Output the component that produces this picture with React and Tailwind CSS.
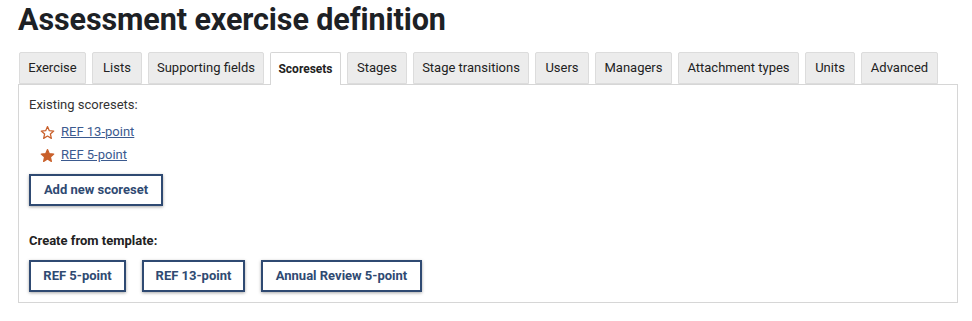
const tabs = [
    { label: "Exercise", w: "w-[67px]" },
    { label: "Lists", w: "w-[50px]" },
    { label: "Supporting fields", w: "w-[116px]" },
    { label: "Scoresets", w: "w-[71px]", active: true },
    { label: "Stages", w: "w-[60px]" },
    { label: "Stage transitions", w: "w-[116px]" },
    { label: "Users", w: "w-[54px]" },
    { label: "Managers", w: "w-[77px]" },
    { label: "Attachment types", w: "w-[121px]" },
    { label: "Units", w: "w-[50px]" },
    { label: "Advanced", w: "w-[77px]" },
];

const Star = ({ filled }) => (
    <svg width="15" height="15" viewBox="0 0 24 24" className="shrink-0">
        <path
            d="M12 2.5l2.9 6.6 7.1.6-5.4 4.7 1.6 7-6.2-3.7-6.2 3.7 1.6-7L2 9.7l7.1-.6z"
            fill={filled ? "#c9602b" : "none"}
            stroke="#c9602b"
            strokeWidth="2"
            strokeLinejoin="round"
        />
    </svg>
);

const Button = ({ children, w }) => (
    <button className={`h-[32px] ${w} border-2 border-[#2f4a72] bg-white text-[13px] font-bold text-[#2f4a72] shadow-[0_1px_3px_rgba(0,0,0,0.35)]`}>
        {children}
    </button>
);

export default function App() {
    return (
        <div className="min-h-[321px] bg-white pl-[18px] pt-[2px] font-['Roboto',sans-serif] text-[#222]">
            <h1 className="text-[30.5px] font-bold leading-[36px] tracking-[-0.1px] text-[#1d2125]">
                Assessment exercise definition
            </h1>

            <div className="mt-[14px] flex items-end gap-[6px] pl-[1px]">
                {tabs.map((t) =>
                    t.active ? (
                        <div
                            key={t.label}
                            className={`${t.w} relative -mb-px flex h-[33px] items-center justify-center rounded-t-[2px] border border-b-0 border-[#d6d6d6] bg-white text-[12px] font-bold text-[#222]`}
                        >
                            {t.label}
                        </div>
                    ) : (
                        <div
                            key={t.label}
                            className={`${t.w} flex h-[32px] items-center justify-center rounded-t-[2px] border border-[#dcdcdc] bg-[#ececec] text-[13px] text-[#222]`}
                        >
                            {t.label}
                        </div>
                    )
                )}
            </div>

            <div className="w-[940px] border border-[#d6d6d6] px-[10px] pb-[10px] pt-[10px] text-[13px]">
                <p className="leading-[20px] text-[#333]">Existing scoresets:</p>
                <ul className="mt-[7px] flex flex-col gap-[3px] pl-[11px]">
                    <li className="flex h-[20px] items-center gap-[6px]">
                        <Star />
                        <a href="#" className="text-[#3b5a8f] underline">REF 13-point</a>
                    </li>
                    <li className="flex h-[20px] items-center gap-[6px]">
                        <Star filled />
                        <a href="#" className="text-[#3b5a8f] underline">REF 5-point</a>
                    </li>
                </ul>
                <div className="mt-[9px]">
                    <Button w="w-[134px]">Add new scoreset</Button>
                </div>
                <p className="mt-[25px] font-bold leading-[20px] text-[#222]">Create from template:</p>
                <div className="mt-[9px] flex gap-[16px]">
                    <Button w="w-[97px]">REF 5-point</Button>
                    <Button w="w-[103px]">REF 13-point</Button>
                    <Button w="w-[161px]">Annual Review 5-point</Button>
                </div>
            </div>
        </div>
    );
}
